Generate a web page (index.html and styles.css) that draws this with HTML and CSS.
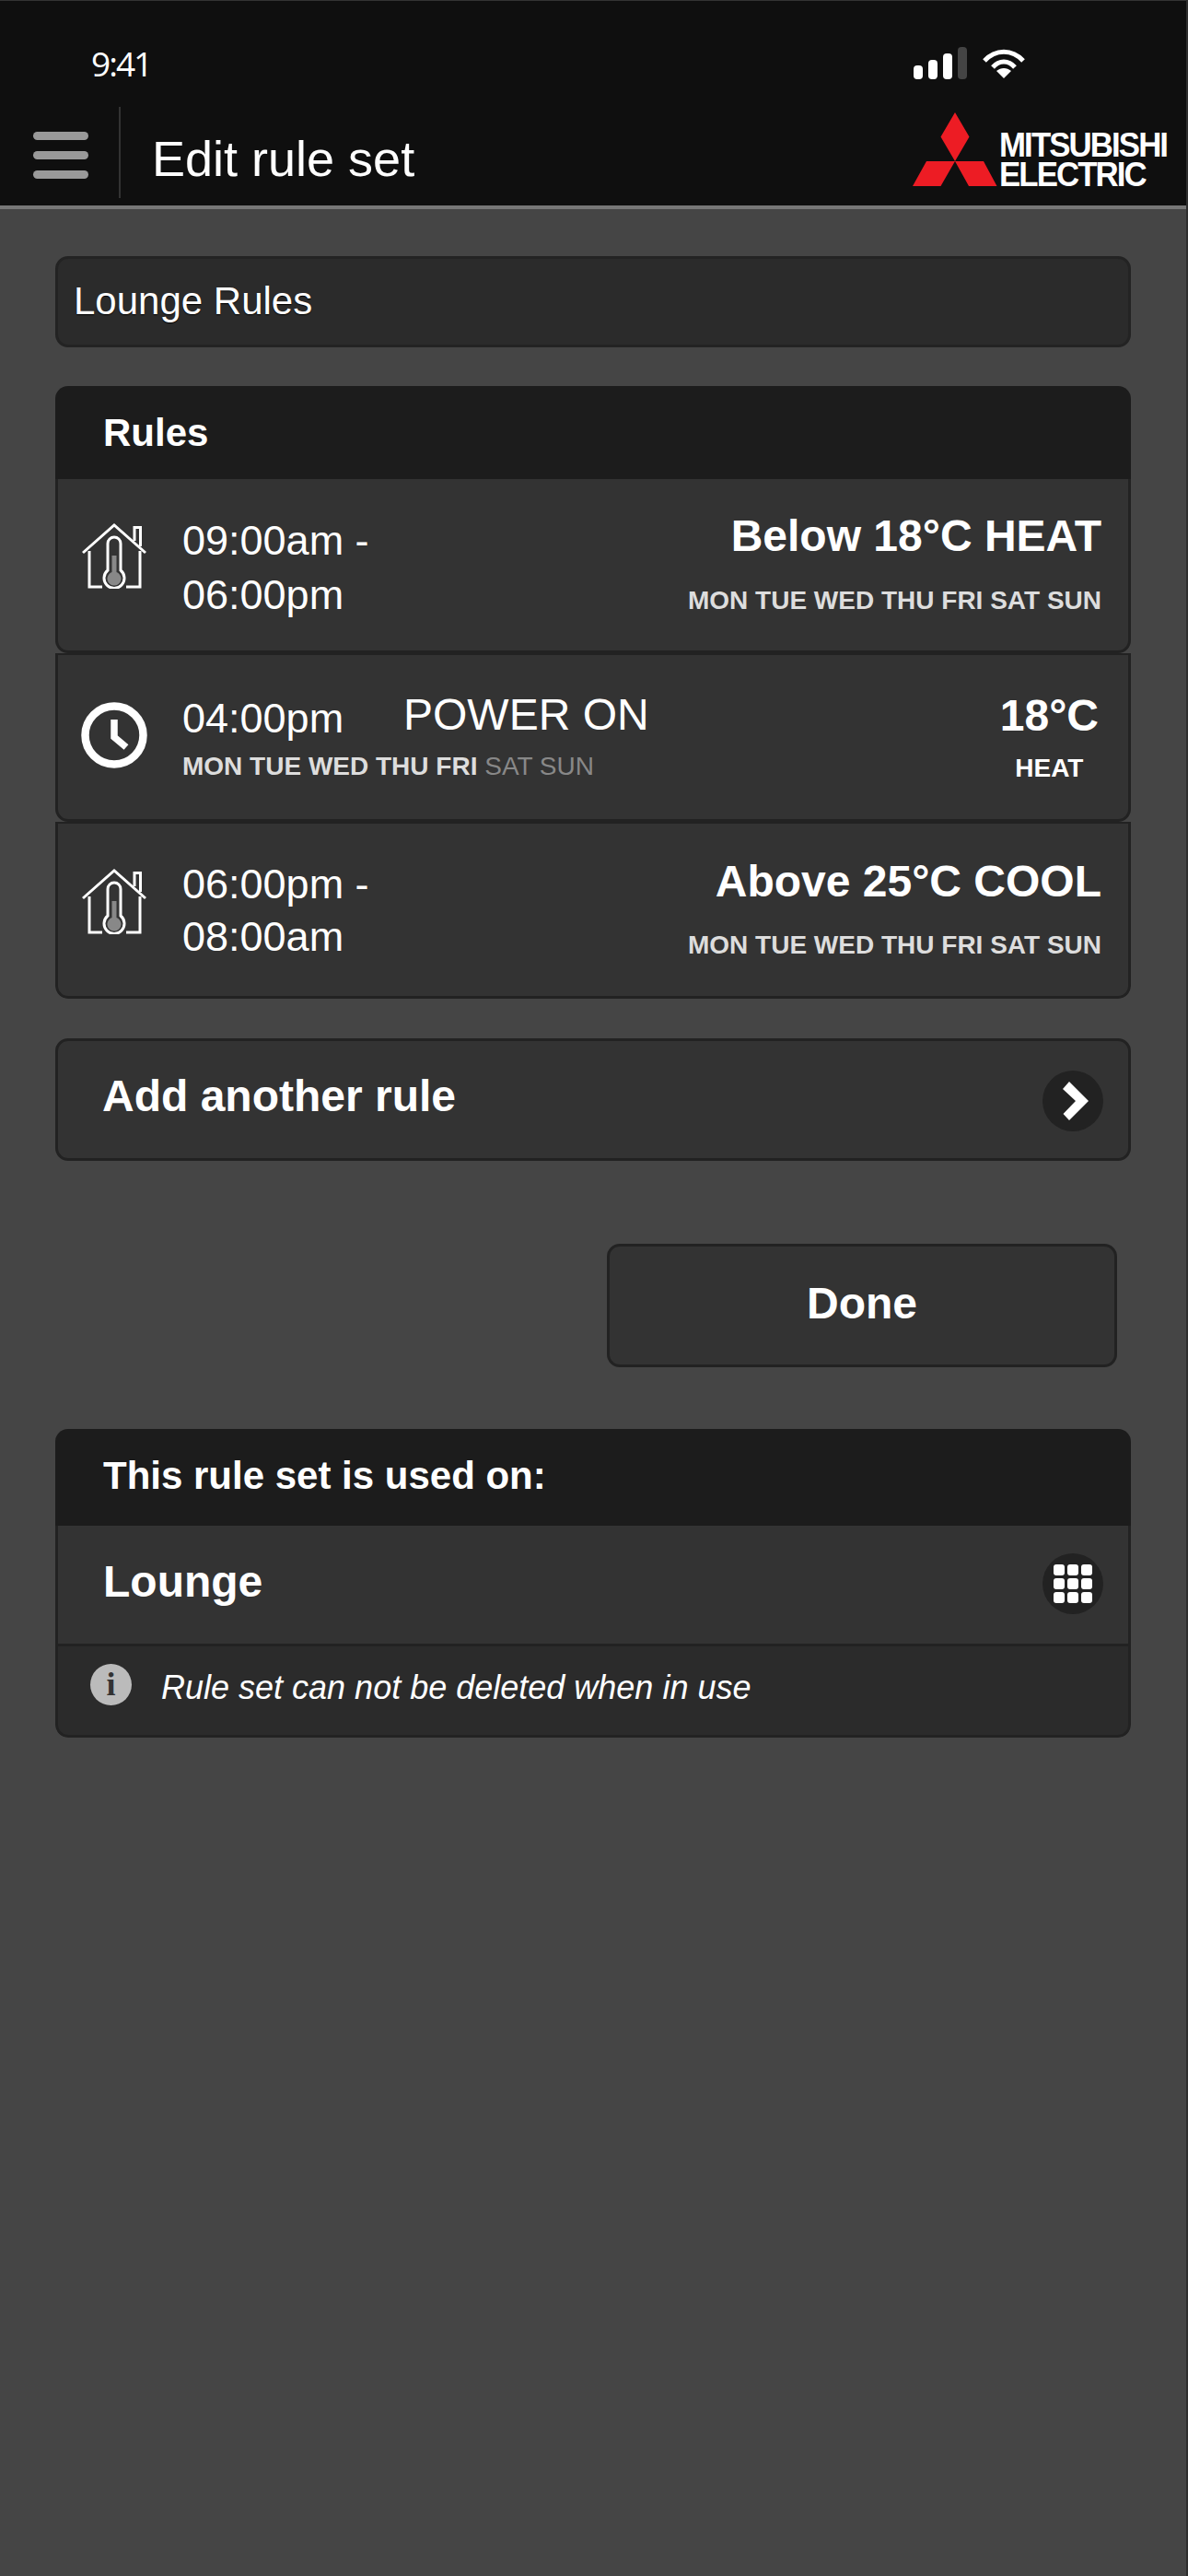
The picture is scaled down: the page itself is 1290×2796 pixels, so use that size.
FILE: index.html
```html
<!DOCTYPE html>
<html lang="en">
<head>
<meta charset="utf-8">
<title>Edit rule set</title>
<link rel="stylesheet" href="styles.css">
</head>
<body>
<div class="page">
  <header class="top">
    <div class="status">
      <span class="clock-text">9:41</span>
      <div class="status-icons">
        <div class="signal">
          <span class="bar b1"></span><span class="bar b2"></span><span class="bar b3"></span><span class="bar b4"></span>
        </div>
        <svg class="wifi" viewBox="0 0 46 33" width="46" height="33">
          <path d="M2 14 C14 1 32 1 44 14" fill="none" stroke="#fff" stroke-width="5"/>
          <path d="M11 21 C18 13 28 13 35 21" fill="none" stroke="#fff" stroke-width="5"/>
          <path d="M23 33 L15 25 C20 21 26 21 31 25 Z" fill="#fff"/>
        </svg>
      </div>
    </div>
    <div class="appbar">
      <div class="burger"><span></span><span></span><span></span></div>
      <div class="divider"></div>
      <h1 class="title">Edit rule set</h1>
      <div class="logo">
        <svg class="logo-mark" viewBox="0 0 92 80" width="92" height="80">
          <path fill="#ed1c24" d="M46 0 L61.500 26.500 L46 53 L30.500 26.500 Z M46 53 L15 53 L0 80 L30.500 80 Z M46 53 L77 53 L91.500 80 L61 80 Z"/>
        </svg>
        <div class="logo-text"><span>MITSUBISHI</span><span>ELECTRIC</span></div>
      </div>
    </div>
  </header>

  <main class="main">
    <div class="name-field">Lounge Rules</div>

    <section class="panel rules">
      <div class="panel-head">Rules</div>

      <div class="row row-one">
        <svg class="ico" viewBox="0 0 72 72" width="72" height="72">
          <g fill="none" stroke="#fff" stroke-width="3">
            <path d="M2 33 L36 3 L70 33"/>
            <path d="M58 20 V5.500 H64.500 V26"/>
            <path d="M9 31 V70 H23"/>
            <path d="M49 70 H64 V31"/>
            <path d="M29 52 V23 A7 7 0 0 1 43 23 V52 A11 11 0 1 1 29 52 Z"/>
          </g>
          <path fill="#888" d="M33.500 36 H38.500 V54 A7.500 7.500 0 1 1 33.500 54 Z"/>
        </svg>
        <div class="times one">09:00am -<br>06:00pm</div>
        <div class="right">
          <div class="cond">Below 18°C HEAT</div>
          <div class="days">MON TUE WED THU FRI SAT SUN</div>
        </div>
      </div>

      <div class="row row-two">
        <svg class="ico clock" viewBox="0 0 72 72" width="72" height="72">
          <circle cx="36" cy="36" r="31.500" fill="none" stroke="#fff" stroke-width="8.500"/>
          <path d="M36 19 V38 L49 49" fill="none" stroke="#fff" stroke-width="7.500"/>
        </svg>
        <div class="mid">
          <div class="mid-line">
            <span class="time-single">04:00pm</span>
            <span class="power">POWER ON</span>
          </div>
          <div class="days days-left">MON TUE WED THU FRI <span class="off">SAT SUN</span></div>
        </div>
        <div class="setpoint">
          <div class="cond">18°C</div>
          <div class="mode">HEAT</div>
        </div>
      </div>

      <div class="row row-three">
        <svg class="ico" viewBox="0 0 72 72" width="72" height="72">
          <g fill="none" stroke="#fff" stroke-width="3">
            <path d="M2 33 L36 3 L70 33"/>
            <path d="M58 20 V5.500 H64.500 V26"/>
            <path d="M9 31 V70 H23"/>
            <path d="M49 70 H64 V31"/>
            <path d="M29 52 V23 A7 7 0 0 1 43 23 V52 A11 11 0 1 1 29 52 Z"/>
          </g>
          <path fill="#888" d="M33.500 36 H38.500 V54 A7.500 7.500 0 1 1 33.500 54 Z"/>
        </svg>
        <div class="times three">06:00pm -<br>08:00am</div>
        <div class="right">
          <div class="cond">Above 25°C COOL</div>
          <div class="days">MON TUE WED THU FRI SAT SUN</div>
        </div>
      </div>
    </section>

    <div class="add">
      <span class="big">Add another rule</span>
      <span class="round">
        <svg viewBox="0 0 66 66" width="66" height="66"><path fill="#fff" d="M22 20 L29 12 L50 33 L29 54 L22.500 47 L36 33 Z"/></svg>
      </span>
    </div>

    <div class="done"><span class="big">Done</span></div>

    <section class="panel used">
      <div class="panel-head tall">This rule set is used on:</div>
      <div class="used-row">
        <span class="big lounge">Lounge</span>
        <span class="round">
          <span class="grid"><i></i><i></i><i></i><i></i><i></i><i></i><i></i><i></i><i></i></span>
        </span>
      </div>
      <div class="note">
        <span class="info">i</span>
        <span class="note-text">Rule set can not be deleted when in use</span>
      </div>
    </section>
  </main>
</div>
</body>
</html>
```

FILE: styles.css
```css
* { box-sizing: border-box; }
html, body { margin: 0; padding: 0; }
body {
  background: #454545;
  color: #fff;
  font-family: "Liberation Sans", Arial, sans-serif;
}
.page { min-height: 2796px; width: 1290px; display: flex; flex-direction: column; border-right: 2px solid #2e2e2e; }

.top { background: #0f0f0f; border-bottom: 4px solid #777; border-top: 1px solid #333; height: 227px; }
.status { height: 103px; padding: 46px 175px 0 99px; display: flex; justify-content: space-between; align-items: flex-start; }
.clock-text { font-family: "Open Sans", sans-serif; font-size: 37px; line-height: 44px; letter-spacing: -2px; }
.status-icons { display: flex; gap: 17px; align-items: flex-start; margin-top: 4px; }
.signal { display: flex; gap: 6px; align-items: flex-end; height: 35px; }
.bar { width: 10px; background: #fff; border-radius: 4px; }
.b1 { height: 15px; }
.b2 { height: 21px; }
.b3 { height: 28px; }
.b4 { height: 35px; background: #444; }
.wifi { display: block; margin-top: 1px; }

.appbar { height: 119px; display: flex; align-items: flex-start; padding: 0 21px 0 36px; }
.burger { width: 60px; margin-top: 39px; display: flex; flex-direction: column; gap: 12px; }
.burger span { display: block; height: 9px; background: #999; border-radius: 5px; }
.divider { width: 2px; height: 99px; margin: 12px 0 0 33px; background: #333; }
.title { margin: 38px 0 0 34px; font-size: 54px; line-height: 60px; font-weight: 400; }
.logo { margin-left: auto; margin-top: 18px; display: flex; align-items: flex-start; gap: 2px; }
.logo-mark { display: block; }
.logo-text { display: flex; flex-direction: column; margin-top: 20px; font-weight: 700; font-size: 37px; line-height: 32px; width: 182px; letter-spacing: -2px; }
.logo-text span { white-space: nowrap; transform: scaleX(.94); transform-origin: left center; }

.main { display: flex; flex-direction: column; padding: 51px 60px 0; }
.name-field { height: 99px; background: #2b2b2b; border: 3px solid #232323; border-radius: 14px; padding: 21px 0 0 17px; font-size: 42px; line-height: 50px; text-shadow: 0 1px 1px #000; }

.panel { margin-top: 42px; border-radius: 14px; overflow: hidden; }
.panel-head { height: 101px; background: #1c1c1c; padding: 26px 0 0 52px; font-size: 42px; line-height: 50px; font-weight: 700; }
.panel-head.tall { height: 105px; }

.row { display: flex; align-items: flex-start; background: #333; border: 3px solid #222; border-radius: 0 0 14px 14px; }
.row-one { height: 189px; border-top: 0; padding-right: 29px; }
.row-two { height: 183px; border-top-width: 2px; padding-right: 32px; }
.row-three { height: 192px; border-top-width: 2px; padding-right: 29px; }
.ico { display: block; margin-left: 25px; flex: none; }
.row-one .ico { margin-top: 47px; }
.row-two .ico { margin-top: 51px; }
.row-three .ico { margin-top: 48px; }
.times { margin-left: 38px; font-size: 45px; }
.times.one { margin-top: 37px; line-height: 59px; }
.times.three { margin-top: 37px; line-height: 57px; }
.right { margin-left: auto; text-align: right; }
.row-one .right { margin-top: 34px; }
.row-three .right { margin-top: 35px; }
.cond { font-size: 48px; line-height: 56px; font-weight: 700; white-space: nowrap; }
.days { font-size: 28px; line-height: 34px; font-weight: 700; color: #ddd; margin-top: 25px; white-space: nowrap; }
.row-three .days { margin-top: 24px; }

.mid { margin: 37px 0 0 38px; }
.mid-line { display: flex; align-items: flex-start; }
.time-single { width: 240px; padding-top: 7px; font-size: 45px; line-height: 50px; }
.power { font-size: 48px; line-height: 56px; white-space: nowrap; }
.days-left { margin-top: 10px; }
.off { font-weight: 400; color: #888; }
.setpoint { margin-left: auto; margin-top: 38px; text-align: center; }
.mode { font-size: 28px; line-height: 34px; font-weight: 700; margin-top: 12px; }

.big { font-size: 48px; line-height: 56px; font-weight: 700; }
.round { width: 66px; height: 66px; border-radius: 50%; background: #222; display: flex; align-items: center; justify-content: center; flex: none; }
.add { margin-top: 43px; height: 133px; background: #333; border: 3px solid #222; border-radius: 14px; padding: 32px 27px 0 48px; display: flex; justify-content: space-between; align-items: flex-start; }
.done { margin-top: 90px; align-self: flex-end; margin-right: 15px; width: 554px; height: 134px; background: #333; border: 3px solid #222; border-radius: 14px; padding-top: 34px; text-align: center; }

.used { margin-top: 67px; }
.used-row { height: 131px; background: #333; border: solid #222; border-width: 0 3px 3px; padding: 30px 27px 0 49px; display: flex; justify-content: space-between; align-items: flex-start; }
.lounge { margin-top: 3px; }
.grid { display: grid; grid-template-columns: repeat(3, 12px); grid-auto-rows: 12px; gap: 3px; }
.grid i { display: block; background: #fff; border-radius: 3px; }
.note { height: 99px; background: #2b2b2b; border: solid #222; border-width: 0 3px 3px; border-radius: 0 0 14px 14px; padding: 19px 0 0 35px; display: flex; align-items: flex-start; }
.info { width: 45px; height: 45px; border-radius: 50%; background: #bbb; color: #333; font-family: "Liberation Serif", serif; font-weight: 700; font-size: 36px; line-height: 45px; text-align: center; flex: none; }
.note-text { margin: 4px 0 0 32px; font-size: 36px; line-height: 44px; font-style: italic; white-space: nowrap; }
```
